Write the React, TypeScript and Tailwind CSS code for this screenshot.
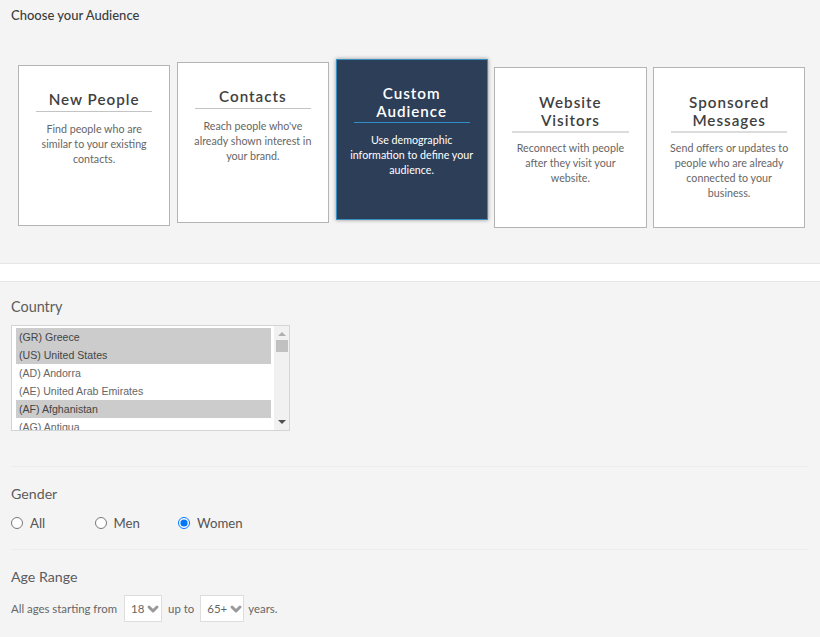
import { ChevronDown } from 'lucide-react';

const audiences = [
  { title: ['New People'], text: 'Find people who are similar to your existing contacts.', offset: 'mt-[42px]', pad: 'pt-[24px]', rule: 'border-b pb-[3px]', gap: 'mt-[9px]' },
  { title: ['Contacts'], text: "Reach people who've already shown interest in your brand.", offset: 'mt-[39px]', pad: 'pt-[24px]', rule: 'border-b pb-[3px]', gap: 'mt-[9px]' },
  { title: ['Custom', 'Audience'], text: 'Use demographic information to define your audience.', offset: 'mt-[36px]', active: true, pad: 'pt-[24px]', rule: 'border-b pb-[2px]', gap: 'mt-[9px]' },
  { title: ['Website', 'Visitors'], text: 'Reconnect with people after they visit your website.', offset: 'mt-[44px]', pad: 'pt-[25px]', rule: 'border-b-2 pb-[2px]', gap: 'mt-[7px]' },
  { title: ['Sponsored', 'Messages'], text: 'Send offers or updates to people who are already connected to your business.', offset: 'mt-[44px]', pad: 'pt-[25px]', rule: 'border-b-2 pb-[2px]', gap: 'mt-[7px]' },
];

const countries = [
  { name: '(GR) Greece', selected: true },
  { name: '(US) United States', selected: true },
  { name: '(AD) Andorra' },
  { name: '(AE) United Arab Emirates' },
  { name: '(AF) Afghanistan', selected: true },
  { name: '(AG) Antigua' },
];

function AudienceCard({ card }: { card: (typeof audiences)[number] }) {
  return (
    <div
      className={`h-[161px] w-[152.25px] shrink-0 border px-[17px] text-center ${card.offset} ${card.pad} ${
        card.active
          ? 'border-[#3a8fc0] bg-[#2c3e58] text-white shadow-[0_0_4px_rgba(0,0,0,0.4)]'
          : 'border-[#b4b4b4] bg-white text-[#404040]'
      }`}
    >
      <div
        className={`${card.rule} text-[15.2px] leading-[18px] font-semibold tracking-[1px] ${
          card.active ? 'border-[#2f8fc4]' : card.title.length > 1 ? 'border-[#dcdcdc]' : 'border-[#c4c4c4]'
        }`}
      >
        {card.title.map((line) => (
          <div key={line}>{line}</div>
        ))}
      </div>
      <p
        className={`${card.gap} text-[10.7px] leading-[15px] ${
          card.active ? '-mx-[6px] text-white' : '-mx-[4px] text-[#666666]'
        }`}
      >
        {card.text}
      </p>
    </div>
  );
}

function Radio({ label, checked }: { label: string; checked?: boolean }) {
  return (
    <label className="flex w-[83.5px] items-center">
      <input type="radio" name="gender" defaultChecked={checked} className="m-0 h-[12px] w-[12px] accent-[#0075ff]" />
      <span className="ml-[7px] text-[13.2px] leading-[18px] text-[#555555]">{label}</span>
    </label>
  );
}

function AgeSelect({ value, width, margin }: { value: string; width: string; margin: string }) {
  return (
    <div className={`flex h-[27px] items-center border border-[#dddddd] bg-white pl-[6px] text-[11.5px] text-[#666666] ${width} ${margin}`}>
      <span>{value}</span>
      <ChevronDown className="ml-[1px] h-[16px] w-[16px] shrink-0 text-[#999999]" strokeWidth={4.5} />
    </div>
  );
}

export default function App() {
  return (
    <div className="h-[637px] w-[820px] overflow-hidden bg-[#f4f4f4] font-['Lato',sans-serif]">
      <h2 className="px-[11px] pt-[7px] text-[13px] leading-[16px] font-medium text-[#3c3c3c]">Choose your Audience</h2>

      <div className="flex h-[240px] items-start gap-[6.5px] pl-[18px]">
        {audiences.map((card) => (
          <AudienceCard key={card.title[0]} card={card} />
        ))}
      </div>

      <div className="h-[19px] border-y border-[#e6e6e6] bg-white" />

      <div className="px-[11px]">
        <h3 className="pt-[16px] text-[14.4px] leading-[18px] text-[#5c5c5c]">Country</h3>
        <div className="mt-[9px] flex h-[106px] w-[279px] overflow-hidden border border-[#d4d4d4] bg-white font-['Liberation_Sans',sans-serif]">
          <div className="min-w-0 flex-1 pt-[2px] pl-[4px] text-[10.6px] leading-[18px] text-[#666666]">
            {countries.map((c) => (
              <div key={c.name} className={`w-[255px] pl-[3px] ${c.selected ? 'bg-[#cccccc] text-[#444444]' : ''}`}>
                {c.name}
              </div>
            ))}
          </div>
          <div className="flex w-[15px] shrink-0 flex-col items-center bg-[#f1f1f1]">
            <div className="mt-[6px] h-0 w-0 border-x-[4px] border-b-[4px] border-x-transparent border-b-[#b0b0b0]" />
            <div className="mt-[4px] h-[12px] w-[12px] bg-[#c1c1c1]" />
            <div className="mt-auto mb-[6px] h-0 w-0 border-x-[4px] border-t-[4px] border-x-transparent border-t-[#505050]" />
          </div>
        </div>

        <div className="mt-[35px] border-t border-[#ececec]" />
        <h3 className="pt-[18px] text-[14.2px] leading-[18px] text-[#5c5c5c]">Gender</h3>
        <div className="mt-[11px] flex">
          <Radio label="All" />
          <Radio label="Men" />
          <Radio label="Women" checked />
        </div>

        <div className="mt-[17px] border-t border-[#ececec]" />
        <h3 className="pt-[18px] text-[14.2px] leading-[18px] text-[#5c5c5c]">Age Range</h3>
        <div className="mt-[9px] flex items-center text-[11.4px] text-[#666666]">
          <span>All ages starting from</span>
          <AgeSelect value="18" width="w-[38px]" margin="mr-[6px] ml-[7px]" />
          <span>up to</span>
          <AgeSelect value="65+" width="w-[44px]" margin="mr-[4px] ml-[6px]" />
          <span>years.</span>
        </div>
      </div>
    </div>
  );
}
